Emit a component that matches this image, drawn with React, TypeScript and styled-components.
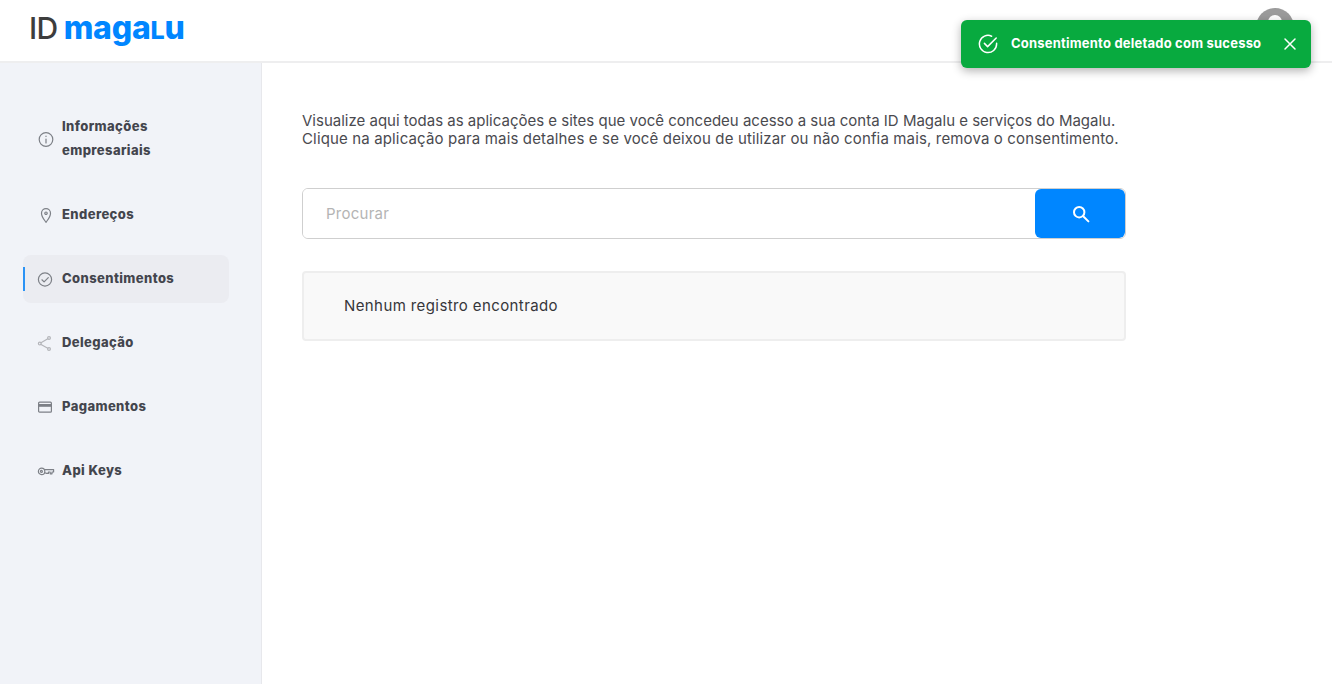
import React from "react";
import styled, { createGlobalStyle } from "styled-components";

const GlobalStyle = createGlobalStyle`
    html, body {
        margin: 0;
        padding: 0;
        background: #ffffff;
    }
    * {
        box-sizing: border-box;
    }
`;

const Page = styled.div`
    position: relative;
    width: 100%;
    height: 684px;
    display: flex;
    flex-direction: column;
    overflow: hidden;
    font-family: "Inter", "Liberation Sans", sans-serif;
`;

const Header = styled.header`
    flex: 0 0 63px;
    display: flex;
    align-items: flex-start;
    justify-content: space-between;
    padding: 8px 38px 0 29px;
    background: #ffffff;
    border-bottom: 2px solid #eeeeef;
`;

const Logo = styled.div`
    display: flex;
    align-items: baseline;
    height: 40px;
    line-height: 40px;
`;

const LogoId = styled.span`
    font-size: 30px;
    font-weight: 500;
    letter-spacing: -0.6px;
    color: #3d3d3d;
    margin-right: 6px;
`;

const LogoName = styled.span`
    font-size: 32px;
    font-weight: 800;
    letter-spacing: -0.2px;
    color: #0086ff;
`;

const LogoSmallL = styled.span`
    font-size: 25px;
    font-weight: 800;
`;

const Avatar = styled.div`
    width: 38px;
    height: 38px;
    border-radius: 50%;
    background: #9b9b9b;
    overflow: hidden;
`;

const Body = styled.div`
    flex: 1;
    display: flex;
`;

const Sidebar = styled.nav`
    flex: 0 0 262px;
    display: flex;
    flex-direction: column;
    gap: 16px;
    padding: 40px 32px 0 23px;
    background: #f1f3f8;
    border-right: 1px solid #e7e8ec;
`;

const NavItem = styled.a<{ $active?: boolean; $tall?: boolean }>`
    position: relative;
    display: flex;
    align-items: center;
    gap: 9px;
    height: ${(p) => (p.$tall ? "72px" : "48px")};
    padding-left: 15px;
    border-radius: 8px;
    background: ${(p) => (p.$active ? "#ebecf1" : "transparent")};

    &::before {
        content: "";
        display: ${(p) => (p.$active ? "block" : "none")};
        position: absolute;
        left: 0;
        top: 12px;
        width: 2px;
        height: 24px;
        background: #2b93f5;
    }
`;

const NavIcon = styled.svg<{ $light?: boolean }>`
    flex: 0 0 15px;
    width: 15px;
    height: 15px;
    fill: none;
    stroke: ${(p) => (p.$light ? "#b4b5ba" : "#7d8087")};
    stroke-width: 1.2;
    stroke-linecap: round;
    stroke-linejoin: round;
    overflow: visible;
`;

const NavLabel = styled.span`
    margin-top: -2px;
    font-size: 13px;
    font-weight: 800;
    line-height: 24px;
    letter-spacing: 0.4px;
    color: #43454d;
`;

const Main = styled.main`
    flex: 1;
    padding: 49px 0 0 40px;
`;

const Content = styled.div`
    width: 824px;
`;

const Intro = styled.div`
    margin-bottom: 40px;
`;

const IntroLine = styled.p<{ $spacing: number }>`
    margin: 0;
    font-size: 15px;
    line-height: 18px;
    letter-spacing: ${(p) => p.$spacing}px;
    color: #4a4a4f;
    white-space: nowrap;
`;

const SearchBar = styled.div`
    display: flex;
    height: 51px;
    border: 1px solid #cfcfcf;
    border-radius: 6px;
    overflow: hidden;
`;

const SearchInput = styled.input`
    flex: 1;
    min-width: 0;
    padding: 0 23px;
    border: none;
    outline: none;
    font-family: inherit;
    font-size: 15px;
    letter-spacing: 0.25px;
    color: #333333;

    &::placeholder {
        color: #b4b4b4;
        opacity: 1;
    }
`;

const SearchButton = styled.button`
    flex: 0 0 90px;
    display: flex;
    align-items: center;
    justify-content: center;
    padding: 0 0 0 2px;
    border: none;
    border-radius: 6px;
    background: #0086ff;
`;

const EmptyBox = styled.div`
    margin-top: 32px;
    height: 70px;
    display: flex;
    align-items: center;
    padding: 0 0 2px 40px;
    background: #f9f9f9;
    border: 2px solid #eeeeee;
    border-radius: 4px;
    font-size: 15px;
    letter-spacing: 0.4px;
    color: #36363a;
`;

const Toast = styled.div`
    position: absolute;
    top: 20px;
    right: 21px;
    width: 350px;
    height: 48px;
    display: flex;
    align-items: center;
    padding: 0 14px 0 17px;
    background: #08aa3f;
    border-radius: 6px;
    box-shadow: 0 3px 10px rgba(0, 0, 0, 0.3);
`;

const ToastText = styled.span`
    flex: 1;
    margin: -2px 0 0 13px;
    font-size: 13px;
    font-weight: 700;
    letter-spacing: 0.21px;
    color: #ffffff;
    white-space: nowrap;
`;

const items = [
    {
        label: "Informações empresariais",
        tall: true,
        icon: (
            <>
                <circle cx="8" cy="7.5" r="6.8" />
                <path d="M8 7v4M8 4.2v.3" />
            </>
        ),
    },
    {
        label: "Endereços",
        icon: (
            <>
                <path d="M8 14.3C6 11.5 3.5 8.8 3.5 5.2a4.5 4.5 0 0 1 9 0c0 3.6-2.5 6.3-4.5 9.1z" />
                <circle cx="8" cy="5.2" r="1.2" />
            </>
        ),
    },
    {
        label: "Consentimentos",
        active: true,
        icon: (
            <>
                <circle cx="7" cy="7.5" r="6.6" />
                <path d="M3.9 7.8l2.2 2.1 4.2-4.3" />
            </>
        ),
    },
    {
        label: "Delegação",
        light: true,
        icon: (
            <>
                <circle cx="1.8" cy="7.6" r="1.4" />
                <circle cx="11" cy="2" r="1.4" />
                <circle cx="11" cy="13" r="1.4" />
                <path d="M3 6.8l6.8-4M3 8.4l6.8 3.8" />
            </>
        ),
    },
    {
        label: "Pagamentos",
        icon: (
            <>
                <rect x="0.6" y="2.2" width="12.8" height="10" rx="1" />
                <path d="M0.6 5.4h12.8" strokeWidth="2.8" strokeLinecap="butt" />
            </>
        ),
    },
    {
        label: "Api Keys",
        icon: (
            <>
                <circle cx="3.6" cy="7.4" r="3.2" />
                <circle cx="3.4" cy="7.4" r="1" />
                <path d="M6.8 5.6h8.8v2.4h-1.6v1.8h-1.8V8h-1.8v1.4H8.6L6.8 8.8" />
            </>
        ),
    },
];

const App = () => {
    return (
        <Page>
            <GlobalStyle />
            <Header>
                <Logo>
                    <LogoId>ID</LogoId>
                    <LogoName>
                        maga<LogoSmallL>L</LogoSmallL>u
                    </LogoName>
                </Logo>
                <Avatar>
                    <svg width="38" height="38" viewBox="0 0 38 38">
                        <circle cx="19" cy="14" r="7" fill="#ffffff" />
                        <ellipse cx="19" cy="35" rx="13" ry="10" fill="#ffffff" />
                    </svg>
                </Avatar>
            </Header>
            <Body>
                <Sidebar>
                    {items.map((item) => (
                        <NavItem key={item.label} $active={item.active} $tall={item.tall}>
                            <NavIcon viewBox="0 0 15 15" $light={item.light}>
                                {item.icon}
                            </NavIcon>
                            <NavLabel>{item.label}</NavLabel>
                        </NavItem>
                    ))}
                </Sidebar>
                <Main>
                    <Content>
                        <Intro>
                            <IntroLine $spacing={0}>
                                Visualize aqui todas as aplicações e sites que você concedeu acesso a sua conta ID Magalu e serviços do Magalu.
                            </IntroLine>
                            <IntroLine $spacing={0.145}>
                                Clique na aplicação para mais detalhes e se você deixou de utilizar ou não confia mais, remova o consentimento.
                            </IntroLine>
                        </Intro>
                        <SearchBar>
                            <SearchInput placeholder="Procurar" />
                            <SearchButton>
                                <svg width="20" height="20" viewBox="0 0 20 20" fill="none" stroke="#ffffff" strokeWidth="2" strokeLinecap="round">
                                    <circle cx="8.2" cy="8.2" r="5.2" />
                                    <path d="M12.2 12.2l5.2 5.2" />
                                </svg>
                            </SearchButton>
                        </SearchBar>
                        <EmptyBox>Nenhum registro encontrado</EmptyBox>
                    </Content>
                </Main>
            </Body>
            <Toast>
                <svg width="20" height="20" viewBox="0 0 20 20" fill="none" stroke="#ffffff" strokeWidth="1.5" strokeLinecap="round" strokeLinejoin="round">
                    <path d="M18.6 9.2v.8a8.6 8.6 0 1 1-5-7.8" />
                    <path d="M6.4 9.4l3.2 3.2 8.6-8.6" />
                </svg>
                <ToastText>Consentimento deletado com sucesso</ToastText>
                <svg width="14" height="14" viewBox="0 0 14 14" fill="none" stroke="#ffffff" strokeWidth="1.5" strokeLinecap="round">
                    <path d="M2 2l10 10M12 2L2 12" />
                </svg>
            </Toast>
        </Page>
    );
};

export default App;
